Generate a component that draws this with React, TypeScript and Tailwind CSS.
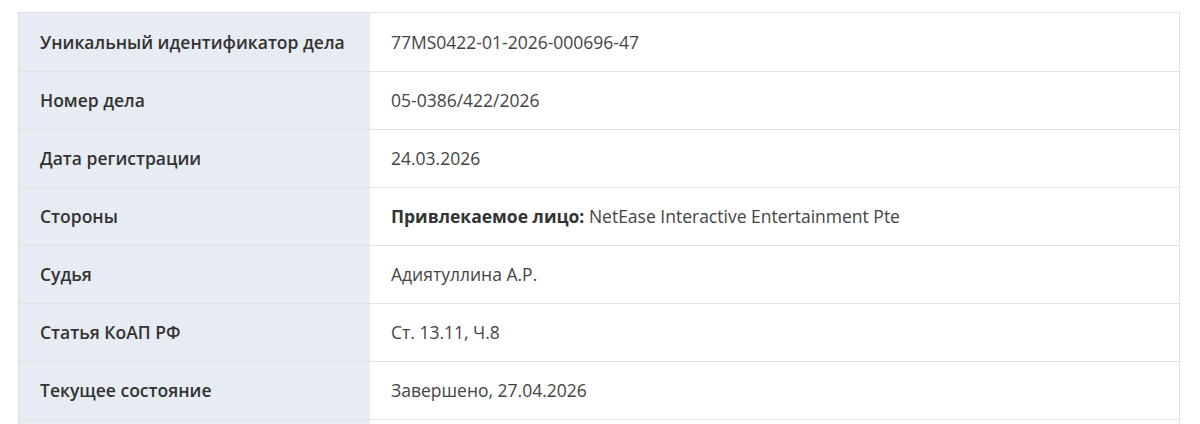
import React from "react";

const rows: { label: string; value: React.ReactNode }[] = [
  { label: "Уникальный идентификатор дела", value: "77MS0422-01-2026-000696-47" },
  { label: "Номер дела", value: "05-0386/422/2026" },
  { label: "Дата регистрации", value: "24.03.2026" },
  {
    label: "Стороны",
    value: (
      <>
        <span className="font-bold text-[#333]">Привлекаемое лицо:</span> NetEase Interactive Entertainment Pte
      </>
    ),
  },
  { label: "Судья", value: "Адиятуллина А.Р." },
  { label: "Статья КоАП РФ", value: "Ст. 13.11, Ч.8" },
  { label: "Текущее состояние", value: "Завершено, 27.04.2026" },
  { label: "", value: "" },
];

export default function App() {
  return (
    <div
      className="h-[424px] overflow-hidden bg-white pt-[12px] pl-[18px] pr-[20px]"
      style={{ fontFamily: '"Open Sans", "Noto Sans", sans-serif' }}
    >
      <div className="border border-[#dde1e5]">
        {rows.map((r, i) => (
          <div key={i} className={`flex h-[58px] ${i > 0 ? "border-t border-[#dde1e5]" : ""}`}>
            <div className="w-[351px] shrink-0 bg-[#e7ecf2] pl-[21px] flex items-center text-[17.5px] font-semibold text-[#333]">
              <span>{r.label}</span>
            </div>
            <div className="flex-1 pl-[21px] flex items-center text-[17.5px] text-[#444]">
              <span>{r.value}</span>
            </div>
          </div>
        ))}
      </div>
    </div>
  );
}
